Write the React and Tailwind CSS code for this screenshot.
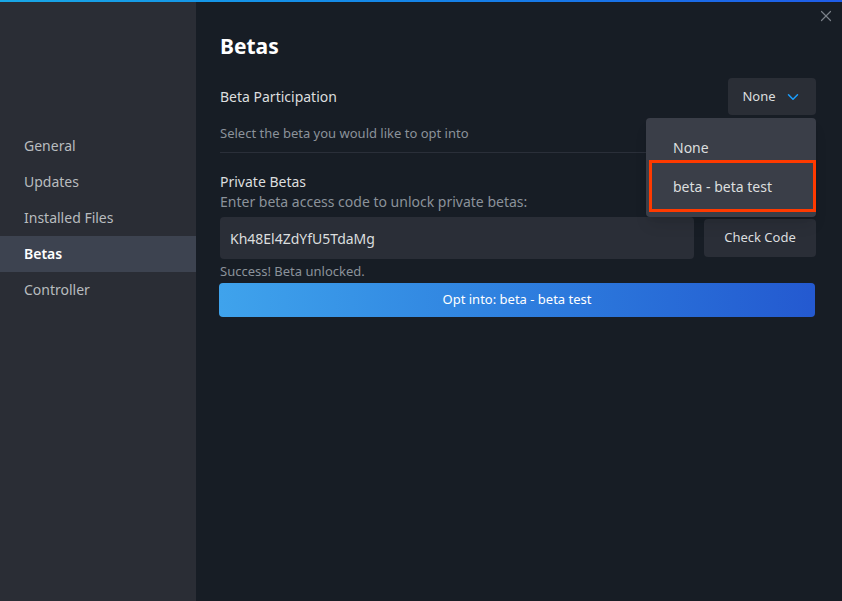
import { X, ChevronDown } from "lucide-react";

const navItems = ["General", "Updates", "Installed Files", "Betas", "Controller"];

export default function App() {
  return (
    <div
      className="relative w-[842px] h-[601px] flex flex-col bg-[#171d25] overflow-hidden"
      style={{ fontFamily: '"Noto Sans", "Open Sans", sans-serif' }}
    >
      <div className="h-[2px] bg-gradient-to-r from-[#19a7e6] to-[#1f5ce8]" />
      <div className="flex flex-1">
        <aside className="w-[196px] bg-[#2a2d35] pt-[126px]">
          {navItems.map((item) => (
            <div
              key={item}
              className={
                item === "Betas"
                  ? "h-9 flex items-center pb-[2px] px-6 text-[14px] bg-[#3d4350] text-white font-semibold"
                  : "h-9 flex items-center pb-[2px] px-6 text-[14px] text-[#b8bcbf]"
              }
            >
              {item}
            </div>
          ))}
        </aside>

        <main className="relative flex-1 pl-6 pr-[26px] pt-[31px]">
          <button className="absolute right-[7px] top-[5px] text-[#7b8189]">
            <X size={18} strokeWidth={1.6} />
          </button>

          <h1 className="text-[21px] leading-[26px] font-bold text-white">Betas</h1>

          <div className="mt-[19px] flex items-center justify-between">
            <span className="text-[14px] text-[#dcdedf]">Beta Participation</span>
            <div className="relative">
              <button className="h-[37px] w-[88px] rounded bg-[#2a2e36] flex items-center justify-center gap-[8px] text-[13px] text-[#dcdedf]">
                None
                <ChevronDown size={18} strokeWidth={2} className="text-[#1a9fff]" />
              </button>
              <div className="absolute right-0 top-[40px] w-[170px] rounded bg-[#3a3e48] shadow-lg pt-[17px] pb-[5px] z-10">
                <div className="h-[25px] flex items-center px-[27px] text-[14px] text-[#dcdedf]">
                  None
                </div>
                <div className="ml-[3px] h-[52px] flex items-center px-[21px] text-[14px] text-[#dcdedf] border-[3px] border-[#ff3a00]">
                  beta - beta test
                </div>
              </div>
            </div>
          </div>

          <p className="mt-[9px] text-[13px] leading-[18px] text-[#8b929a]">
            Select the beta you would like to opt into
          </p>
          <div className="mt-[10px] h-px bg-[#2a2f39]" />

          <div className="mt-[19px] text-[14px] leading-[20px] text-[#dcdedf]">Private Betas</div>
          <div className="text-[14px] leading-[20px] text-[#8b929a]">
            Enter beta access code to unlock private betas:
          </div>

          <div className="mt-[5px] flex items-center gap-[10px]">
            <div className="flex-1 h-[42px] rounded bg-[#2a2e37] flex items-center px-[10px] text-[14px] text-[#dcdedf]">
              Kh48El4ZdYfU5TdaMg
            </div>
            <button className="w-[112px] h-[38px] rounded bg-[#2a2e37] text-[13px] text-[#dcdedf]">
              Check Code
            </button>
          </div>

          <p className="mt-[2px] text-[13px] leading-[20px] text-[#8b929a]">Success! Beta unlocked.</p>

          <button className="mt-[2px] ml-[-1px] w-[596px] h-[34px] rounded-sm bg-gradient-to-r from-[#3fa3ec] to-[#2459d0] text-[13px] text-white">
            Opt into: beta - beta test
          </button>
        </main>
      </div>
    </div>
  );
}
